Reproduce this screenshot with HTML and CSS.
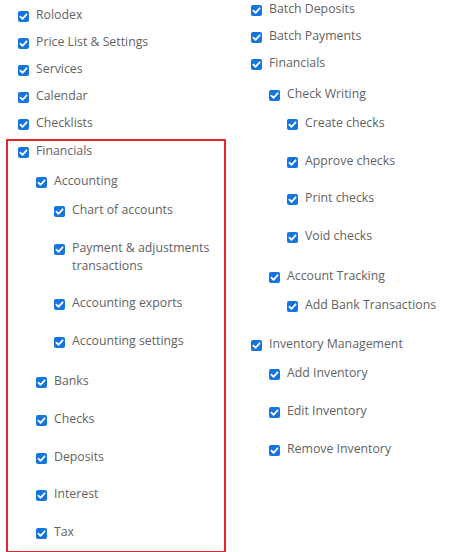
FILE: index.html
```html
<!DOCTYPE html>
<html>
<head>
<meta charset="utf-8">
<link rel="stylesheet" href="styles.css">
</head>
<body>
<div class="page">
  <ul class="col col-left">
    <li><label class="row"><span class="cb"></span><span class="txt">Rolodex</span></label></li>
    <li><label class="row"><span class="cb"></span><span class="txt">Price List &amp; Settings</span></label></li>
    <li><label class="row"><span class="cb"></span><span class="txt">Services</span></label></li>
    <li><label class="row"><span class="cb"></span><span class="txt">Calendar</span></label></li>
    <li><label class="row"><span class="cb"></span><span class="txt">Checklists</span></label></li>
    <li class="highlight">
      <label class="row"><span class="cb"></span><span class="txt">Financials</span></label>
      <ul class="sub">
        <li>
          <label class="row"><span class="cb"></span><span class="txt">Accounting</span></label>
          <ul class="sub">
            <li><label class="row"><span class="cb"></span><span class="txt">Chart of accounts</span></label></li>
            <li><label class="row"><span class="cb"></span><span class="txt">Payment &amp; adjustments transactions</span></label></li>
            <li><label class="row"><span class="cb"></span><span class="txt">Accounting exports</span></label></li>
            <li><label class="row"><span class="cb"></span><span class="txt">Accounting settings</span></label></li>
          </ul>
        </li>
        <li><label class="row"><span class="cb"></span><span class="txt">Banks</span></label></li>
        <li><label class="row"><span class="cb"></span><span class="txt">Checks</span></label></li>
        <li><label class="row"><span class="cb"></span><span class="txt">Deposits</span></label></li>
        <li><label class="row"><span class="cb"></span><span class="txt">Interest</span></label></li>
        <li><label class="row"><span class="cb"></span><span class="txt">Tax</span></label></li>
      </ul>
    </li>
  </ul>
  <ul class="col col-right">
    <li><label class="row"><span class="cb"></span><span class="txt">Batch Deposits</span></label></li>
    <li><label class="row"><span class="cb"></span><span class="txt">Batch Payments</span></label></li>
    <li class="top-group">
      <label class="row"><span class="cb"></span><span class="txt">Financials</span></label>
      <ul class="sub">
        <li>
          <label class="row"><span class="cb"></span><span class="txt">Check Writing</span></label>
          <ul class="sub">
            <li><label class="row"><span class="cb"></span><span class="txt">Create checks</span></label></li>
            <li><label class="row"><span class="cb"></span><span class="txt">Approve checks</span></label></li>
            <li><label class="row"><span class="cb"></span><span class="txt">Print checks</span></label></li>
            <li><label class="row"><span class="cb"></span><span class="txt">Void checks</span></label></li>
          </ul>
        </li>
        <li>
          <label class="row"><span class="cb"></span><span class="txt">Account Tracking</span></label>
          <ul class="sub">
            <li><label class="row"><span class="cb"></span><span class="txt">Add Bank Transactions</span></label></li>
          </ul>
        </li>
      </ul>
    </li>
    <li>
      <label class="row"><span class="cb"></span><span class="txt">Inventory Management</span></label>
      <ul class="sub">
        <li><label class="row"><span class="cb"></span><span class="txt">Add Inventory</span></label></li>
        <li><label class="row"><span class="cb"></span><span class="txt">Edit Inventory</span></label></li>
        <li><label class="row"><span class="cb"></span><span class="txt">Remove Inventory</span></label></li>
      </ul>
    </li>
  </ul>
</div>
</body>
</html>
```
FILE: styles.css
```css
html, body {
  margin: 0;
  padding: 0;
  background: #ffffff;
}
body {
  font-family: "Open Sans", "Liberation Sans", sans-serif;
  font-size: 12.3px;
  color: #636363;
  width: 449px;
  height: 552px;
  overflow: hidden;
}
.page {
  display: flex;
  align-items: flex-start;
}
ul {
  list-style: none;
  margin: 0;
  padding: 0;
}
.col {
  display: flex;
  flex-direction: column;
  gap: 9px;
  padding-left: 18px;
}
.col-left {
  width: 215px;
  margin-top: 5.5px;
}
.col-right {
  margin-top: 0;
}
.sub {
  display: flex;
  flex-direction: column;
  gap: 19.6px;
  margin-top: 11.5px;
  margin-bottom: 3px;
  padding-left: 18px;
}
.col-right .sub {
  margin-top: 11px;
}
.col-right > .top-group > .sub {
  margin-top: 13px;
}
.row {
  display: flex;
  align-items: flex-start;
  line-height: 18px;
}
.cb {
  flex: none;
  width: 11px;
  height: 11px;
  margin-top: 5px;
  margin-right: 7px;
  border-radius: 2px;
  background-color: #1474e0;
  background-image: url("data:image/svg+xml,%3Csvg xmlns='http://www.w3.org/2000/svg' viewBox='0 0 11 11'%3E%3Cpath d='M2.4 5.7 L4.5 7.8 L8.6 3.3' fill='none' stroke='white' stroke-width='1.8' stroke-linecap='round' stroke-linejoin='round'/%3E%3C/svg%3E");
  background-size: 11px 11px;
}
.txt {
  white-space: normal;
}
.highlight {
  margin-top: -2px;
  margin-left: -12px;
  padding: 1.5px 0 7px 10px;
  width: 206px;
  border: 2px solid #e5262c;
}
.highlight .txt {
  max-width: 150px;
}
.top-group {
  padding-bottom: 6px;
}
```
